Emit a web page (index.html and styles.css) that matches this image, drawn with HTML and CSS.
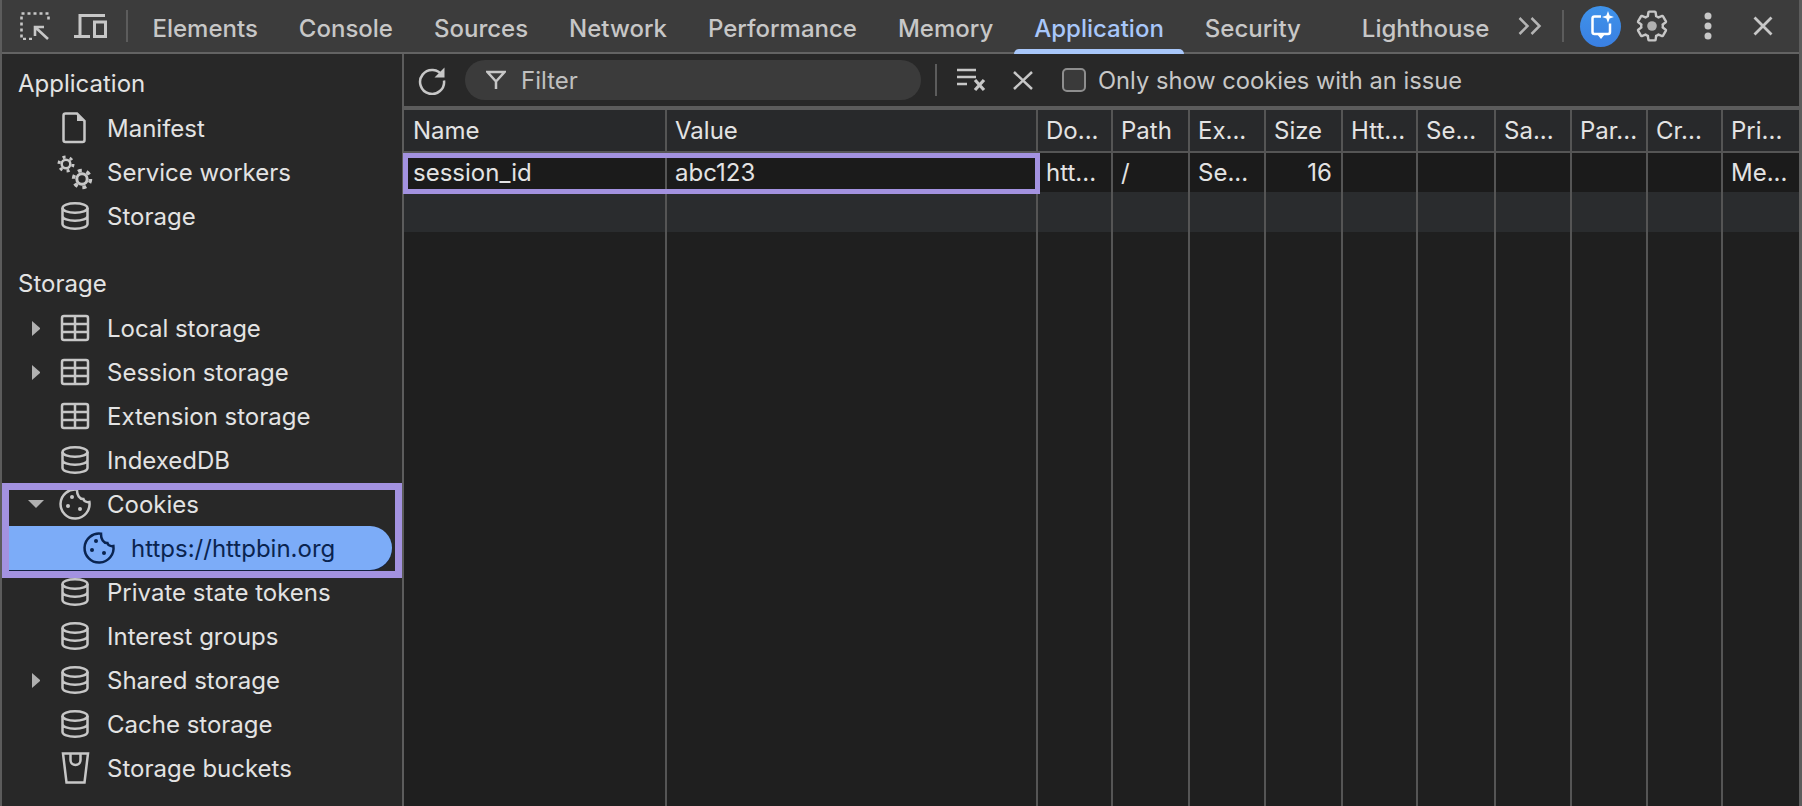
FILE: index.html
```html
<!DOCTYPE html>
<html lang="en">
<head>
    <meta charset="UTF-8">
    <title>DevTools - Application</title>
    <link rel="stylesheet" href="styles.css">
</head>
<body>
    <!-- shared icons -->
    <svg class="sprite" width="0" height="0">
        <symbol id="i-db" viewBox="0 0 34 34">
            <ellipse cx="17" cy="9" rx="12.5" ry="4.8"/>
            <path d="M4.5 9v16c0 2.7 5.6 4.8 12.5 4.8s12.5-2.1 12.5-4.8V9M4.5 17c0 2.7 5.6 4.8 12.5 4.8s12.5-2.1 12.5-4.8"/>
        </symbol>
        <symbol id="i-table" viewBox="0 0 34 34">
            <rect x="4" y="5" width="26" height="24" rx="2"/>
            <path d="M4 13h26M4 21h26M17 5v24"/>
        </symbol>
        <symbol id="i-cookie" viewBox="0 0 34 34">
            <path d="M19 2.7A14.5 14.5 0 1 0 31.4 15c-3.2.6-5.6-.9-6-3-3.8.3-6.6-4-6.4-9.3Z"/>
            <circle class="dot" cx="14" cy="10" r="2"/>
            <circle class="dot" cx="10" cy="19" r="2"/>
            <circle class="dot" cx="22" cy="22" r="2"/>
        </symbol>
    </svg>

    <div class="devtools">
        <header class="tabbar">
            <svg class="tool-inspect" width="30" height="28" viewBox="0 0 30 28">
                <path class="dashed" d="M1.5 1.5H28.5M1.5 4.5V27H12M28.5 4.5V9"/>
                <path d="M15 24V15H24M15 15L28 27"/>
            </svg>
            <svg class="tool-device" width="33" height="24" viewBox="0 0 33 24">
                <path d="M6 22V1.5H31M0 22.5H16"/>
                <rect x="20.5" y="8" width="11" height="14.5"/>
            </svg>
            <span class="bar-sep"></span>
            <nav class="tabs">
                <a class="tab">Elements</a>
                <a class="tab">Console</a>
                <a class="tab">Sources</a>
                <a class="tab">Network</a>
                <a class="tab">Performance</a>
                <a class="tab">Memory</a>
                <a class="tab active">Application</a>
                <a class="tab tab-wide">Security</a>
                <a class="tab">Lighthouse</a>
            </nav>
            <div class="tabbar-right">
                <svg class="tool-more" width="24" height="18" viewBox="0 0 24 18">
                    <path d="M1.5 1L9.5 9L1.5 17M13.5 1L21.5 9L13.5 17"/>
                </svg>
                <span class="bar-sep sep-right"></span>
                <span class="ai-btn">
                    <svg width="41" height="41" viewBox="0 0 41 41">
                        <path class="ai-line" d="M21 10.5H14.5a2 2 0 0 0-2 2V26a2 2 0 0 0 2 2H28a2 2 0 0 0 2-2V17.5"/>
                        <path class="ai-fill" d="M17 28H25L21 33ZM28 5l1.6 4.4 4.4 1.6-4.4 1.6-1.6 4.4-1.6-4.4-4.4-1.6 4.4-1.6Z"/>
                    </svg>
                </span>
                <svg class="tool-gear" width="36" height="36" viewBox="0 0 24 24">
                    <path d="M19.14 12.94c.04-.3.06-.61.06-.94 0-.32-.02-.64-.07-.94l2.03-1.58c.18-.14.23-.41.12-.61l-1.92-3.32c-.12-.22-.37-.29-.59-.22l-2.39.96c-.5-.38-1.03-.7-1.62-.94l-.36-2.54c-.04-.24-.24-.41-.48-.41h-3.84c-.24 0-.43.17-.47.41l-.36 2.54c-.59.24-1.13.57-1.62.94l-2.39-.96c-.22-.08-.47 0-.59.22L2.74 8.87c-.12.21-.08.47.12.61l2.03 1.58c-.05.3-.09.63-.09.94s.02.64.07.94l-2.03 1.58c-.18.14-.23.41-.12.61l1.92 3.32c.12.22.37.29.59.22l2.39-.96c.5.38 1.03.7 1.62.94l.36 2.54c.05.24.24.41.48.41h3.84c.24 0 .44-.17.47-.41l.36-2.54c.59-.24 1.13-.56 1.62-.94l2.39.96c.22.08.47 0 .59-.22l1.92-3.32c.12-.22.07-.47-.12-.61l-2.01-1.58z"/>
                    <circle cx="12" cy="12" r="3.2"/>
                </svg>
                <svg class="tool-dots" width="12" height="32" viewBox="0 0 12 32">
                    <circle cx="6" cy="6" r="3.5"/>
                    <circle cx="6" cy="16" r="3.5"/>
                    <circle cx="6" cy="26" r="3.5"/>
                </svg>
                <svg class="tool-close" width="20" height="20" viewBox="0 0 20 20">
                    <path d="M1.5 1.5L18.5 18.5M18.5 1.5L1.5 18.5"/>
                </svg>
            </div>
        </header>

        <div class="panel">
            <aside class="sidebar">
                <div class="side-heading">Application</div>
                <div class="tree-row">
                    <span class="arrow"></span>
                    <svg class="icon" viewBox="0 0 34 34">
                        <path d="M7.5 2.5H19L26.5 10V29a2 2 0 0 1-2 2H7.5a2 2 0 0 1-2-2V4.5a2 2 0 0 1 2-2Z"/>
                        <path class="dot" d="M19 2.5V10H26.5Z"/>
                    </svg>
                    <span class="tree-label">Manifest</span>
                </div>
                <div class="tree-row">
                    <span class="arrow"></span>
                    <svg class="icon" viewBox="0 0 34 34">
                        <circle cx="8" cy="9" r="4.3" stroke-width="2.5"/>
                        <circle cx="8" cy="9" r="7" stroke-width="3" stroke-dasharray="3 4.33"/>
                        <circle cx="24" cy="24" r="5.2" stroke-width="3"/>
                        <circle cx="24" cy="24" r="8.5" stroke-width="3.5" stroke-dasharray="4 4.9"/>
                    </svg>
                    <span class="tree-label">Service workers</span>
                </div>
                <div class="tree-row">
                    <span class="arrow"></span>
                    <svg class="icon"><use href="#i-db"/></svg>
                    <span class="tree-label">Storage</span>
                </div>

                <div class="side-heading heading-gap">Storage</div>
                <div class="tree-row">
                    <span class="arrow arrow-right"></span>
                    <svg class="icon"><use href="#i-table"/></svg>
                    <span class="tree-label">Local storage</span>
                </div>
                <div class="tree-row">
                    <span class="arrow arrow-right"></span>
                    <svg class="icon"><use href="#i-table"/></svg>
                    <span class="tree-label">Session storage</span>
                </div>
                <div class="tree-row">
                    <span class="arrow"></span>
                    <svg class="icon"><use href="#i-table"/></svg>
                    <span class="tree-label">Extension storage</span>
                </div>
                <div class="tree-row">
                    <span class="arrow"></span>
                    <svg class="icon"><use href="#i-db"/></svg>
                    <span class="tree-label">IndexedDB</span>
                </div>

                <div class="cookie-group">
                    <div class="tree-row">
                        <span class="arrow arrow-down"></span>
                        <svg class="icon"><use href="#i-cookie"/></svg>
                        <span class="tree-label">Cookies</span>
                    </div>
                    <div class="tree-row nested selected">
                        <span class="arrow"></span>
                        <svg class="icon"><use href="#i-cookie"/></svg>
                        <span class="tree-label">https://httpbin.org</span>
                    </div>
                </div>

                <div class="tree-row">
                    <span class="arrow"></span>
                    <svg class="icon"><use href="#i-db"/></svg>
                    <span class="tree-label">Private state tokens</span>
                </div>
                <div class="tree-row">
                    <span class="arrow"></span>
                    <svg class="icon"><use href="#i-db"/></svg>
                    <span class="tree-label">Interest groups</span>
                </div>
                <div class="tree-row">
                    <span class="arrow arrow-right"></span>
                    <svg class="icon"><use href="#i-db"/></svg>
                    <span class="tree-label">Shared storage</span>
                </div>
                <div class="tree-row">
                    <span class="arrow"></span>
                    <svg class="icon"><use href="#i-db"/></svg>
                    <span class="tree-label">Cache storage</span>
                </div>
                <div class="tree-row">
                    <span class="arrow"></span>
                    <svg class="icon" viewBox="0 0 34 34">
                        <path d="M5 2.5H30L26.5 31.5H8.5ZM12.5 3v6a5 5 0 0 0 10 0V3"/>
                    </svg>
                    <span class="tree-label">Storage buckets</span>
                </div>
            </aside>

            <main class="main">
                <div class="toolbar">
                    <svg class="tool-refresh" width="30" height="30" viewBox="0 0 30 30">
                        <path d="M25.5 11A12 12 0 1 0 27 15.5"/>
                        <path class="solid" d="M27.5 2.5V12.5H17.5Z"/>
                    </svg>
                    <div class="filter-box">
                        <svg width="20" height="20" viewBox="0 0 20 20">
                            <path d="M1.5 2H18.5L10 11.5ZM10 11.5V19"/>
                        </svg>
                        <span>Filter</span>
                    </div>
                    <span class="toolbar-sep"></span>
                    <svg class="tool-clear" width="29" height="24" viewBox="0 0 29 24">
                        <path d="M0 2H19M0 9H19M0 16H10"/>
                        <path class="thick" d="M18 12L27 22M27 12L18 22"/>
                    </svg>
                    <svg class="tool-x" width="20" height="19" viewBox="0 0 20 19">
                        <path d="M1 1L19 18M19 1L1 18"/>
                    </svg>
                    <label class="issue-check">
                        <span class="checkbox"></span>
                        Only show cookies with an issue
                    </label>
                </div>

                <div class="table-wrap">
                    <table class="cookies">
                        <colgroup>
                            <col class="col-name">
                            <col class="col-value">
                            <col class="col-75">
                            <col class="col-77">
                            <col class="col-76">
                            <col class="col-77">
                            <col class="col-75">
                            <col class="col-78">
                            <col class="col-76">
                            <col class="col-76">
                            <col class="col-75">
                            <col class="col-78">
                        </colgroup>
                        <thead>
                            <tr>
                                <th>Name</th><th>Value</th><th>Do...</th><th>Path</th><th>Ex...</th><th>Size</th>
                                <th>Htt...</th><th>Se...</th><th>Sa...</th><th>Par...</th><th>Cr...</th><th>Pri...</th>
                            </tr>
                        </thead>
                        <tbody>
                            <tr class="row-data">
                                <td>session_id</td><td>abc123</td><td>htt...</td><td>/</td><td>Se...</td><td class="num">16</td>
                                <td></td><td></td><td></td><td></td><td></td><td>Me...</td>
                            </tr>
                            <tr class="row-empty">
                                <td></td><td></td><td></td><td></td><td></td><td></td>
                                <td></td><td></td><td></td><td></td><td></td><td></td>
                            </tr>
                            <tr class="row-filler">
                                <td></td><td></td><td></td><td></td><td></td><td></td>
                                <td></td><td></td><td></td><td></td><td></td><td></td>
                            </tr>
                        </tbody>
                    </table>
                    <div class="row-highlight"></div>
                </div>
            </main>
        </div>
    </div>
</body>
</html>
```

FILE: styles.css
```css
* {
    margin: 0;
    padding: 0;
    box-sizing: border-box;
}

html, body {
    height: 100%;
    overflow: hidden;
}

body {
    background: #1f1f1f;
    font-family: Inter, 'Liberation Sans', sans-serif;
    font-size: 24px;
    color: #e3e3e3;
}

svg {
    flex-shrink: 0;
    color: #c7c7c7;
    fill: none;
    stroke: currentColor;
    stroke-width: 2.5;
}

.sprite {
    position: absolute;
}

.devtools {
    display: flex;
    flex-direction: column;
    height: 100%;
    border-left: 2px solid #5c5c5c;
    border-right: 3px solid #5c5c5c;
}

/* top tab bar */
.tabbar {
    display: flex;
    align-items: center;
    height: 54px;
    flex-shrink: 0;
    padding-right: 26px;
    background: #3c3c3c;
    border-bottom: 2px solid #636363;
}

.tool-inspect {
    margin-left: 18px;
    stroke-width: 2.6;
}

.tool-inspect .dashed {
    stroke-dasharray: 3 3;
}

.tool-device {
    margin-left: 24px;
    stroke-width: 3;
}

.bar-sep {
    width: 2px;
    height: 32px;
    margin-left: 19px;
    background: #5c5c5c;
}

.tabs {
    display: flex;
    align-self: stretch;
    margin-left: 4px;
}

.tab {
    display: flex;
    align-items: center;
    padding: 4px 20.5px 0;
    color: #c7c7c7;
    font-weight: 500;
    white-space: nowrap;
}

.tab.active {
    position: relative;
    color: #a8c7fa;
}

/* underline sits on the bar border */
.tab.active::after {
    content: "";
    position: absolute;
    left: 0;
    right: 0;
    bottom: -2px;
    height: 5px;
    background: #a8c7fa;
    border-radius: 5px 5px 0 0;
}

.tab-wide {
    margin-right: 20px;
}

.tabbar-right {
    display: flex;
    align-items: center;
    margin-left: auto;
}

.tool-more {
    color: #b4b4b4;
}

.sep-right {
    margin-left: 20px;
}

.ai-btn {
    display: flex;
    width: 41px;
    height: 41px;
    margin-left: 16px;
    border-radius: 50%;
    background: linear-gradient(#3f93ea, #3a7fe2);
}

.ai-line {
    stroke: #fff;
    stroke-width: 2.5;
}

.ai-fill {
    fill: #fff;
    stroke: none;
}

.tool-gear {
    margin-left: 13px;
    stroke-width: 1.6;
}

.tool-gear circle {
    fill: #b0b0b0;
    stroke: none;
}

.tool-dots {
    margin-left: 32px;
    fill: #c7c7c7;
    stroke: none;
}

.tool-close {
    margin-left: 39px;
    stroke-width: 2.8;
}

/* panel */
.panel {
    display: flex;
    flex: 1;
    min-height: 0;
}

.sidebar {
    width: 402px;
    flex-shrink: 0;
    padding-top: 8px;
    background: #282828;
    border-right: 2px solid #5c5c5c;
}

.side-heading {
    height: 44px;
    line-height: 44px;
    padding-left: 16px;
}

.heading-gap {
    margin-top: 24px;
}

.tree-row {
    display: flex;
    align-items: center;
    height: 44px;
    padding-left: 26px;
    white-space: nowrap;
}

.arrow {
    width: 16px;
    flex-shrink: 0;
}

.arrow-right {
    width: 8px;
    height: 15px;
    margin: 0 4px;
    border-left: 8px solid #b0b0b0;
    border-top: 7.5px solid transparent;
    border-bottom: 7.5px solid transparent;
}

.arrow-down {
    height: 8px;
    border-top: 8px solid #b0b0b0;
    border-left: 8px solid transparent;
    border-right: 8px solid transparent;
}

.icon {
    width: 34px;
    height: 34px;
    margin: 0 15px 0 14px;
    overflow: visible;
}

.dot {
    fill: currentColor;
    stroke: none;
}

.cookie-group {
    position: relative;
}

/* purple callout over the cookies rows */
.cookie-group::after {
    content: "";
    box-sizing: border-box;
    position: absolute;
    top: 1px;
    left: 0;
    right: 0;
    height: 95px;
    border: 7px solid #a392e0;
    pointer-events: none;
}

.tree-row.nested {
    padding-left: 50px;
}

.tree-row.selected {
    margin-right: 10px;
    background: #7cacf8;
    color: #0a2450;
    border-radius: 0 22px 22px 0;
    box-shadow: 0 1px 0 #14213f;
}

.selected .icon {
    color: #0a2450;
}

/* cookies view */
.main {
    display: flex;
    flex-direction: column;
    flex: 1;
    min-width: 0;
}

.toolbar {
    display: flex;
    align-items: center;
    height: 56px;
    flex-shrink: 0;
    background: #282828;
    border-bottom: 4px solid #5c5c5c;
}

.tool-refresh {
    margin-left: 13px;
}

.tool-refresh .solid {
    fill: #c7c7c7;
    stroke: none;
}

.filter-box {
    display: flex;
    align-items: center;
    gap: 15px;
    width: 456px;
    height: 40px;
    margin-left: 18px;
    padding-left: 21px;
    border-radius: 20px;
    background: #3b3b3b;
    color: #c0c0c0;
}

.toolbar-sep {
    width: 2px;
    height: 32px;
    margin-left: 14px;
    background: #5c5c5c;
}

.tool-clear {
    margin-left: 20px;
}

.tool-clear .thick {
    stroke-width: 3.2;
}

.tool-x {
    margin-left: 27px;
}

.issue-check {
    display: flex;
    align-items: center;
    gap: 12px;
    margin-left: 29px;
    color: #c7c7c7;
    font-size: 23.7px;
    white-space: nowrap;
}

.checkbox {
    width: 24px;
    height: 24px;
    background: #3a3a3a;
    border: 2px solid #8e8e8e;
    border-radius: 5px;
}

.table-wrap {
    position: relative;
    flex: 1;
    min-height: 0;
}

.cookies {
    width: 100%;
    height: 100%;
    table-layout: fixed;
    border-collapse: separate;
    border-spacing: 0;
}

.col-name { width: 261px; }
.col-value { width: 371px; }
.col-75 { width: 75px; }
.col-76 { width: 76px; }
.col-77 { width: 77px; }
.col-78 { width: 78px; }

.cookies th,
.cookies td {
    padding: 0 0 0 8px;
    overflow: hidden;
    border-left: 2px solid #555;
    font-weight: 400;
    text-align: left;
    white-space: nowrap;
}

.cookies th:first-child,
.cookies td:first-child {
    border-left: none;
    padding-left: 9px;
}

.cookies th {
    height: 43px;
    background: #28292b;
    border-bottom: 2px solid #555;
}

.cookies td.num {
    padding-right: 9px;
    text-align: right;
}

.row-data td {
    height: 39px;
    background: #1b1b1b;
}

.row-empty td {
    height: 40px;
    background: #2a2c2e;
}

.row-filler td {
    height: auto;
}

/* purple callout over the name and value cells */
.row-highlight {
    position: absolute;
    top: 43px;
    left: -1px;
    width: 637px;
    height: 41px;
    border: 5px solid #a392e0;
    pointer-events: none;
}
```
